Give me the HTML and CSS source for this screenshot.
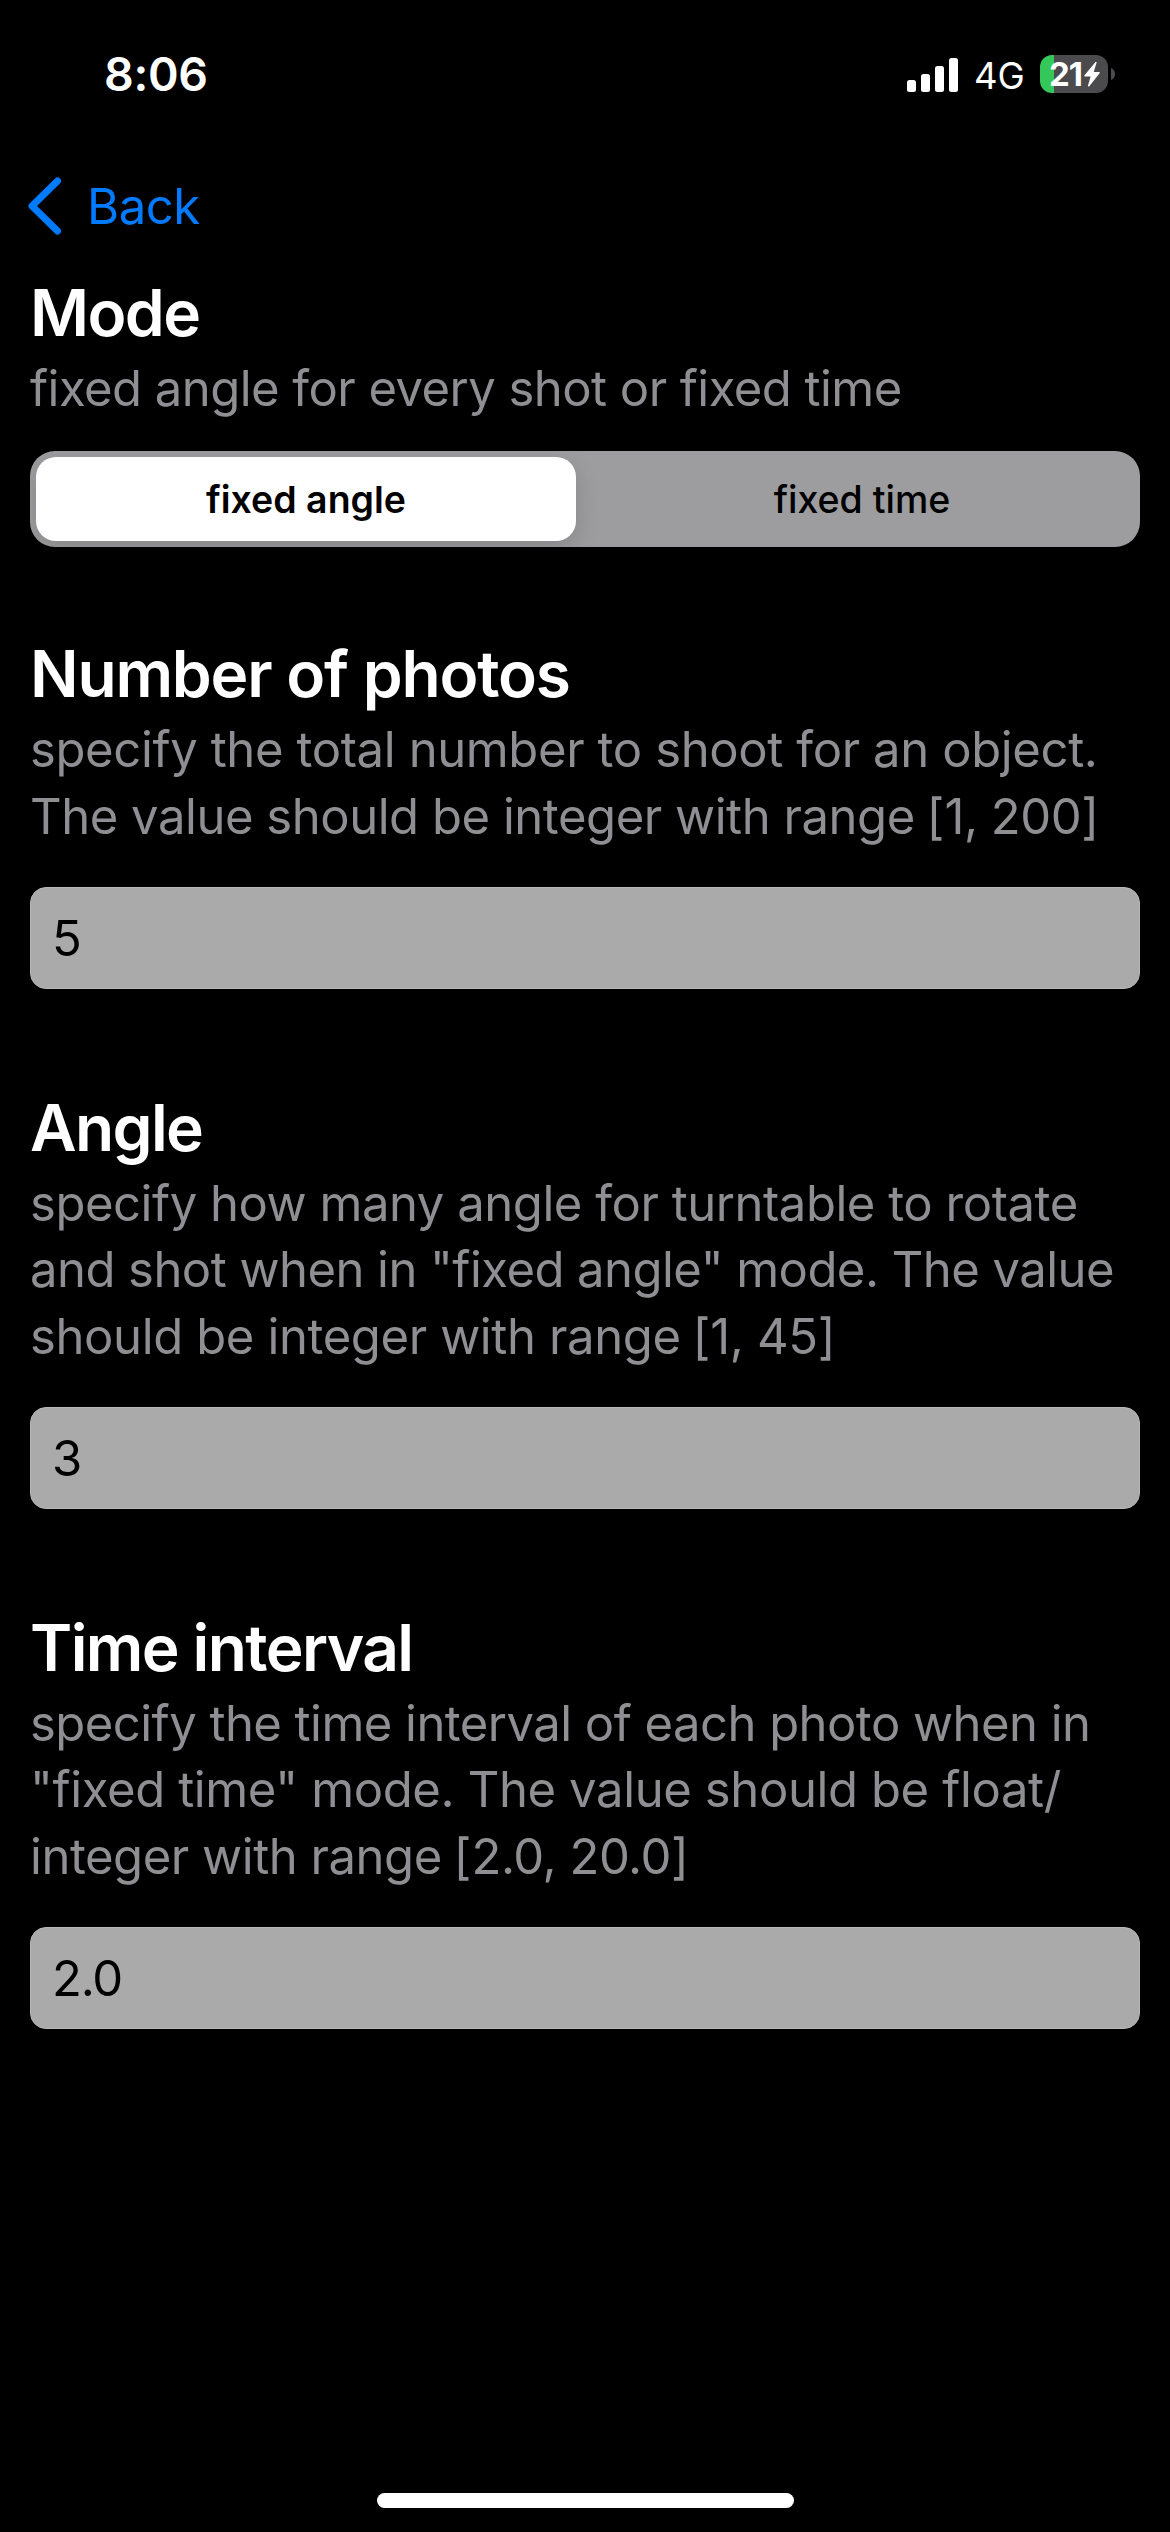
FILE: index.html
```html
<!DOCTYPE html>
<html lang="en">
<head>
<meta charset="utf-8">
<title>Mode</title>
<link rel="stylesheet" href="styles.css">
</head>
<body>
<div class="screen">
  <header class="status">
    <span class="time">8:06</span>
    <div class="indicators">
      <svg class="signal" viewBox="0 0 51 34" fill="#fff">
        <rect x="0" y="22" width="9" height="12" rx="2.5"/>
        <rect x="14" y="16" width="9" height="18" rx="2.5"/>
        <rect x="28" y="8" width="9" height="26" rx="2.5"/>
        <rect x="42" y="0" width="9" height="34" rx="2.5"/>
      </svg>
      <span class="network">4G</span>
      <div class="battery">
        <span class="level">21</span>
        <svg class="bolt" viewBox="0 0 16 25" fill="#fff"><path d="M11.3.3 0.5 13.2c-.5.7-.2 1.2.5 1.2h5.6L4 23.4c-.3 1.2.6 1.6 1.300.8L15.600 11.300c.5-.7.2-1.300-.5-1.300H9.700L12.500 1.100C12.900 0 12-.5 11.300.3Z"/></svg>
      </div>
      <svg class="nub" viewBox="0 0 4 12" fill="#4b4b4d"><path d="M0 0c2.600.9 4 3.200 4 6s-1.400 5.100-4 6Z"/></svg>
    </div>
  </header>
  <nav class="nav">
    <svg class="chevron" viewBox="0 0 34 58" fill="none" stroke="#007aff" stroke-width="7" stroke-linecap="round" stroke-linejoin="round"><path d="M29.500 4 4 29 29.500 54"/></svg>
    <span class="back">Back</span>
  </nav>
  <main class="form">
    <section class="group mode">
      <h2 class="title snug">Mode</h2>
      <p class="desc"><span class="line tight">fixed angle for every shot or fixed time</span></p>
      <div class="segmented">
        <div class="segment selected">fixed angle</div>
        <div class="segment">fixed time</div>
      </div>
    </section>
    <section class="group">
      <h2 class="title">Number of photos</h2>
      <p class="desc"><span class="line loose">specify the total number to shoot for an object.</span><span class="line">The value should be integer with range<span class="range"> [</span>1, 200]</span></p>
      <div class="field">5</div>
    </section>
    <section class="group">
      <h2 class="title snug">Angle</h2>
      <p class="desc"><span class="line">specify how many angle for turntable to rotate</span><span class="line tight">and shot when in "fixed angle" mode. The value</span><span class="line loose">should be integer with range<span class="range"> [</span>1, 45]</span></p>
      <div class="field">3</div>
    </section>
    <section class="group">
      <h2 class="title snug">Time interval</h2>
      <p class="desc"><span class="line tight">specify the time interval of each photo when in</span><span class="line loose">"fixed time" mode. The value should be float/</span><span class="line">integer with range<span class="range"> [</span>2.0, 20.0]</span></p>
      <div class="field">2.0</div>
    </section>
  </main>
  <div class="home"></div>
</div>
</body>
</html>
```
FILE: styles.css
```css
* { box-sizing: border-box; }
body {
  margin: 0;
  background: #000;
  color: #fff;
  font-family: Inter, "Liberation Sans", sans-serif;
}
.screen {
  width: 1170px;
  height: 2532px;
  display: flex;
  flex-direction: column;
  overflow: hidden;
}
.status {
  height: 150px;
  padding: 0 55px 2px 104px;
  display: flex;
  align-items: center;
  justify-content: space-between;
}
.time {
  font-size: 46.5px;
  font-weight: 600;
  letter-spacing: -0.3px;
}
.indicators { display: flex; align-items: center; }
.signal { width: 51px; height: 34px; margin: 2px 16px 0 0; }
.network {
  width: 66px;
  font-size: 36.5px;
  line-height: 40px;
  padding-top: 3px;
}
.battery {
  width: 68px;
  height: 38px;
  border-radius: 12px;
  background: linear-gradient(90deg, #34c759 14px, #4b4b4d 14px);
  display: flex;
  align-items: center;
  padding-left: 9px;
}
.level {
  width: 35px;
  font-size: 33px;
  font-weight: 700;
  line-height: 38px;
  letter-spacing: -1px;
}
.bolt { width: 16px; height: 25px; flex: none; margin-top: 1px; }
.nub { width: 4px; height: 12px; margin-left: 3px; }
.nav {
  height: 123px;
  padding: 0 0 1px 28px;
  display: flex;
  align-items: center;
}
.chevron { width: 34px; height: 58px; margin-top: -10px; }
.back {
  margin: -10px 0 0 25px;
  color: #007aff;
  font-size: 49px;
  letter-spacing: -0.4px;
}
.form {
  flex: 1;
  padding: 0 30px;
  display: flex;
  flex-direction: column;
  gap: 98.5px;
}
.mode { margin-bottom: -11.5px; }
.title {
  margin: 0 0 3px;
  font-size: 64px;
  font-weight: 600;
  line-height: 80px;
  letter-spacing: -1.2px;
}
.title.snug { letter-spacing: -1.6px; }
.desc {
  margin: 0 0 37px;
  color: #8e8e93;
  font-size: 49px;
  line-height: 66.5px;
  letter-spacing: -0.46px;
}
.mode .desc { margin-bottom: 28.5px; }
.line { display: block; white-space: nowrap; }
.tight { letter-spacing: -0.54px; }
.loose { letter-spacing: -0.38px; }
/* the opening bracket sits closer to the word before it */
.range { word-spacing: -2px; letter-spacing: 0; }
.segmented {
  height: 96px;
  padding: 6px;
  border-radius: 25px;
  background: #9d9d9f;
  display: grid;
  grid-template-columns: 540px 1fr;
  column-gap: 14px;
  color: #000;
  overflow: hidden;
}
.segment {
  border-radius: 20px;
  display: flex;
  align-items: center;
  justify-content: center;
  font-size: 37.5px;
  font-weight: 500;
}
.selected {
  background: #fff;
  font-weight: 600;
  box-shadow: 0 8px 24px rgba(0, 0, 0, 0.14);
}
.field {
  height: 102px;
  padding: 2px 0 0 21px;
  border: 1px solid #b8b8b8;
  border-radius: 16px;
  background: #aaa;
  color: #000;
  font-size: 49px;
  line-height: 98px;
  letter-spacing: -1.2px;
}
.home {
  width: 417px;
  height: 15px;
  margin: 0 auto 24px;
  border-radius: 8px;
  background: #fff;
}
```
